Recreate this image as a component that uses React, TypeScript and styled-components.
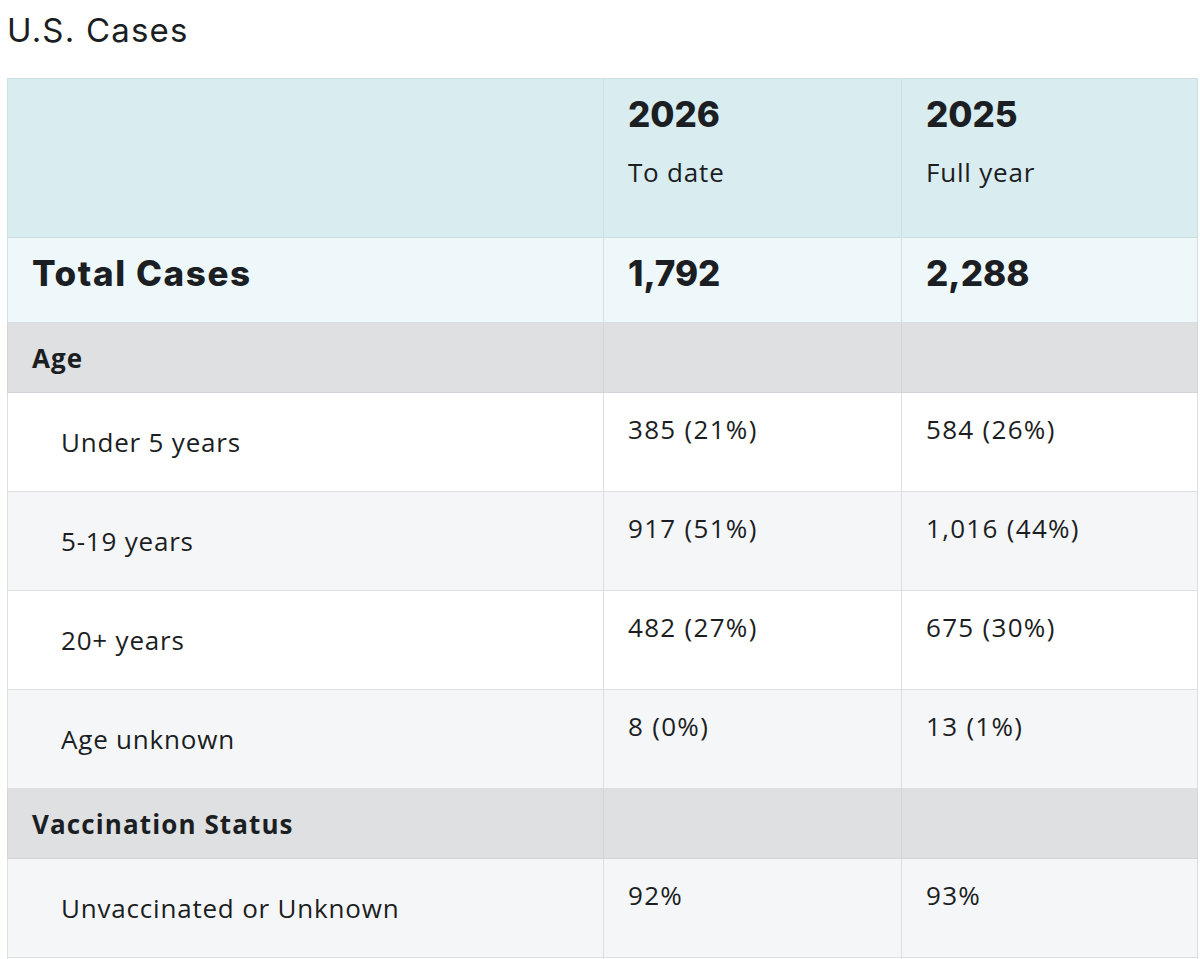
import React from "react";
import styled, { createGlobalStyle } from "styled-components";

const Global = createGlobalStyle`
  html, body { margin: 0; padding: 0; background: #ffffff; }
  body { font-family: "Open Sans", "Lato", sans-serif; color: #1b1e22; }
`;

const Page = styled.div`
  padding: 0 2px 0 7px;
`;

const Title = styled.h2`
  margin: 0;
  padding-top: 8px;
  height: 78px;
  box-sizing: border-box;
  font-family: "Inter", "Open Sans", sans-serif;
  font-weight: 400;
  font-size: 33px;
  line-height: 44px;
  letter-spacing: 1.2px;
  color: #1b1e22;
`;

const Table = styled.table`
  width: 1191px;
  border-collapse: collapse;
  table-layout: fixed;
  border: 1px solid #d7dadd;
`;

const Cell = styled.td<{ $w?: number }>`
  border: 1px solid #dcdfe2;
  box-sizing: border-box;
  ${(p) => (p.$w ? `width: ${p.$w}px;` : "")}
`;

const HeadRow = styled.tr`
  background: #d9ecf0;
  height: 159px;
`;

const HeadCell = styled(Cell)`
  border-color: #cddfe3;
  vertical-align: top;
  padding: 14px 24px 0 24px;
`;

const Year = styled.div`
  font-family: "Inter", sans-serif;
  font-weight: 800;
  font-size: 35px;
  line-height: 42px;
`;

const Sub = styled.div`
  font-size: 26px;
  line-height: 36px;
  margin-top: 19px;
  letter-spacing: 0.8px;
`;

const TotalRow = styled.tr`
  background: #eef8fa;
  height: 85px;
`;

const TotalCell = styled(Cell)<{ $spaced?: boolean }>`
  border-color: #d3e1e4;
  vertical-align: top;
  padding: 14px 24px 0 24px;
  font-family: "Inter", sans-serif;
  font-weight: 800;
  font-size: 35px;
  line-height: 42px;
  letter-spacing: ${(p) => (p.$spaced ? "1.6px" : "0")};
`;

const SectionRow = styled.tr`
  background: #dfe0e2;
  height: 70px;
`;

const SectionCell = styled(Cell)`
  border-color: #d2d4d7;
  vertical-align: middle;
  padding: 0 24px;
  font-weight: 700;
  font-size: 26px;
  line-height: 36px;
  letter-spacing: 1.1px;
`;

const DataRow = styled.tr`
  background: #ffffff;
  height: 99px;
  &:nth-child(odd) {
    background: #f5f6f8;
  }
`;

const LabelCell = styled(Cell)`
  vertical-align: middle;
  padding: 0 24px 0 53px;
  font-size: 26px;
  line-height: 36px;
  letter-spacing: 0.8px;
`;

const ValueCell = styled(Cell)`
  vertical-align: top;
  padding: 18px 24px 0 24px;
  font-size: 26px;
  line-height: 36px;
  letter-spacing: 1.3px;
`;

type Row =
  | { kind: "section"; label: string }
  | { kind: "data"; label: string; a: string; b: string };

const rows: Row[] = [
  { kind: "section", label: "Age" },
  { kind: "data", label: "Under 5 years", a: "385 (21%)", b: "584 (26%)" },
  { kind: "data", label: "5-19 years", a: "917 (51%)", b: "1,016 (44%)" },
  { kind: "data", label: "20+ years", a: "482 (27%)", b: "675 (30%)" },
  { kind: "data", label: "Age unknown", a: "8 (0%)", b: "13 (1%)" },
  { kind: "section", label: "Vaccination Status" },
  { kind: "data", label: "Unvaccinated or Unknown", a: "92%", b: "93%" },
  { kind: "data", label: "", a: "", b: "" },
];

export default function App() {
  return (
    <>
      <Global />
      <Page>
        <Title>U.S. Cases</Title>
        <Table>
          <tbody>
            <HeadRow>
              <HeadCell $w={596} />
              <HeadCell $w={298}>
                <Year>2026</Year>
                <Sub>To date</Sub>
              </HeadCell>
              <HeadCell>
                <Year>2025</Year>
                <Sub>Full year</Sub>
              </HeadCell>
            </HeadRow>
            <TotalRow>
              <TotalCell $spaced>Total Cases</TotalCell>
              <TotalCell>1,792</TotalCell>
              <TotalCell>2,288</TotalCell>
            </TotalRow>
            {rows.map((r, i) =>
              r.kind === "section" ? (
                <SectionRow key={i}>
                  <SectionCell>{r.label}</SectionCell>
                  <SectionCell />
                  <SectionCell />
                </SectionRow>
              ) : (
                <DataRow key={i}>
                  <LabelCell>{r.label}</LabelCell>
                  <ValueCell>{r.a}</ValueCell>
                  <ValueCell>{r.b}</ValueCell>
                </DataRow>
              )
            )}
          </tbody>
        </Table>
      </Page>
    </>
  );
}
